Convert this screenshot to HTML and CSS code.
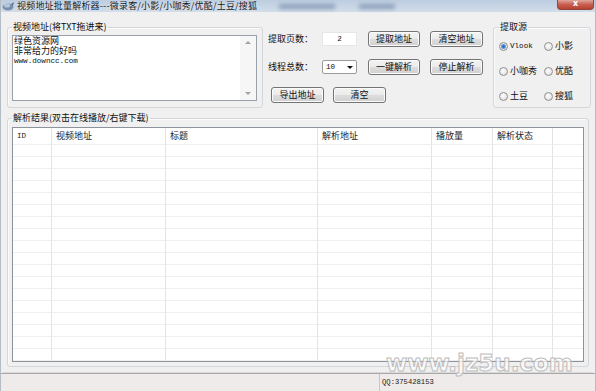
FILE: index.html
```html
<!DOCTYPE html>
<html lang="zh-CN">

<head>
    <meta charset="UTF-8">
    <meta name="viewport" content="width=device-width, initial-scale=1.0">
    <title>视频地址批量解析器</title>

    <link rel="stylesheet" href="styles.css">
</head>

<body>
    <div class="window">
        <div class="title-bar">
            <svg class="app-icon" width="12" height="10" viewBox="0 0 12 10">
                <ellipse cx="6" cy="6" rx="5.5" ry="3.5" fill="#7890ad" />
                <ellipse cx="5" cy="4.5" rx="3" ry="2" fill="#b7c7da" />
                <path d="M9 3 L12 1 L11 5 Z" fill="#5d7594" />
            </svg>
            <span class="title-text">视频地址批量解析器---微录客/小影/小咖秀/优酷/土豆/搜狐</span>
            <span class="ghost ghost-one"></span>
            <span class="ghost ghost-two"></span>
            <div class="close-btn">x</div>
        </div>

        <div class="client">
            <div class="top-row">
                <!-- input list -->
                <fieldset class="group url-group">
                    <legend>视频地址(将TXT拖进来)</legend>
                    <div class="memo">
                        <div class="memo-text">
                            <div class="memo-line">绿色资源网</div>
                            <div class="memo-line">非常给力的好吗</div>
                            <div class="memo-line latin">www.downcc.com</div>
                        </div>
                        <div class="memo-scroll">
                            <span class="arrow arrow-up"></span>
                            <span class="arrow arrow-down"></span>
                        </div>
                    </div>
                </fieldset>

                <div class="controls">
                    <div class="control-row">
                        <span class="control-label">提取页数：</span>
                        <div class="text-box latin">2</div>
                        <button class="btn">提取地址</button>
                        <button class="btn btn-right">清空地址</button>
                    </div>
                    <div class="control-row">
                        <span class="control-label">线程总数：</span>
                        <div class="combo">
                            <span class="latin">10</span>
                            <span class="combo-arrow"></span>
                        </div>
                        <button class="btn">一键解析</button>
                        <button class="btn btn-right">停止解析</button>
                    </div>
                    <div class="control-row bottom-row">
                        <button class="btn btn-export">导出地址</button>
                        <button class="btn btn-clear">清空</button>
                    </div>
                </div>

                <!-- source picker -->
                <fieldset class="group source-group">
                    <legend>提取源</legend>
                    <div class="radio-grid">
                        <label class="radio"><input type="radio" name="source" checked><span class="latin">Vlook</span></label>
                        <label class="radio"><input type="radio" name="source">小影</label>
                        <label class="radio"><input type="radio" name="source">小咖秀</label>
                        <label class="radio"><input type="radio" name="source">优酷</label>
                        <label class="radio"><input type="radio" name="source">土豆</label>
                        <label class="radio"><input type="radio" name="source">搜狐</label>
                    </div>
                </fieldset>
            </div>

            <fieldset class="group result-group">
                <legend>解析结果(双击在线播放/右键下载)</legend>
                <table class="result-list">
                    <thead>
                        <tr>
                            <th class="col-id latin">ID</th>
                            <th class="col-url">视频地址</th>
                            <th class="col-title">标题</th>
                            <th class="col-parse">解析地址</th>
                            <th class="col-views">播放量</th>
                            <th class="col-state">解析状态</th>
                            <th class="col-rest"></th>
                        </tr>
                    </thead>
                    <tbody>
                        <tr><td></td><td></td><td></td><td></td><td></td><td></td><td></td></tr>
                        <tr><td></td><td></td><td></td><td></td><td></td><td></td><td></td></tr>
                        <tr><td></td><td></td><td></td><td></td><td></td><td></td><td></td></tr>
                        <tr><td></td><td></td><td></td><td></td><td></td><td></td><td></td></tr>
                        <tr><td></td><td></td><td></td><td></td><td></td><td></td><td></td></tr>
                        <tr><td></td><td></td><td></td><td></td><td></td><td></td><td></td></tr>
                        <tr><td></td><td></td><td></td><td></td><td></td><td></td><td></td></tr>
                        <tr><td></td><td></td><td></td><td></td><td></td><td></td><td></td></tr>
                        <tr><td></td><td></td><td></td><td></td><td></td><td></td><td></td></tr>
                        <tr><td></td><td></td><td></td><td></td><td></td><td></td><td></td></tr>
                        <tr><td></td><td></td><td></td><td></td><td></td><td></td><td></td></tr>
                        <tr><td></td><td></td><td></td><td></td><td></td><td></td><td></td></tr>
                        <tr><td></td><td></td><td></td><td></td><td></td><td></td><td></td></tr>
                        <tr><td></td><td></td><td></td><td></td><td></td><td></td><td></td></tr>
                        <tr><td></td><td></td><td></td><td></td><td></td><td></td><td></td></tr>
                        <tr><td></td><td></td><td></td><td></td><td></td><td></td><td></td></tr>
                        <tr><td></td><td></td><td></td><td></td><td></td><td></td><td></td></tr>
                        <tr><td></td><td></td><td></td><td></td><td></td><td></td><td></td></tr>
                    </tbody>
                </table>
            </fieldset>
        </div>

        <div class="status-bar">
            <div class="status-cell status-left"></div>
            <div class="status-cell latin status-qq">QQ:375428153</div>
        </div>

        <div class="watermark">www.jz5u.com</div>
    </div>
</body>

</html>
```

FILE: styles.css
```css
body {
    margin: 0;
    font-family: "Noto Sans CJK SC", sans-serif;
    font-size: 9px;
    color: #0e0e0e;
    background-color: #f0f0f0;
    overflow: hidden;
}

.window {
    position: relative;
    width: 596px;
    height: 391px;
    box-sizing: border-box;
    display: flex;
    flex-direction: column;
    background-color: #f0f0f0;
    border-left: 1px solid #b4bcc6;
    border-right: 1px solid #b4bcc6;
}

.latin {
    font-family: "Liberation Mono", monospace;
    font-size: 7.6px;
}

/* title bar */
.title-bar {
    height: 12px;
    flex-shrink: 0;
    display: flex;
    align-items: center;
    padding-left: 1px;
    background: linear-gradient(#bccde0, #d2dde9);
    line-height: 10px;
}

.app-icon {
    flex-shrink: 0;
}

.title-text {
    margin-left: 3px;
    color: #1a1a1a;
    letter-spacing: 0.2px;
    white-space: nowrap;
    text-shadow: 0 0 3px #e8eef5;
}

.ghost {
    height: 5px;
    background-color: #7e93b0;
    filter: blur(2px);
    opacity: 0.8;
}

.ghost-one {
    margin-left: 22px;
    width: 56px;
}

.ghost-two {
    margin-left: 24px;
    width: 36px;
}

.close-btn {
    align-self: flex-start;
    margin-left: auto;
    margin-right: 1px;
    width: 35px;
    height: 9px;
    border: 1px solid #93453d;
    border-top: none;
    border-radius: 0 0 4px 4px;
    background: linear-gradient(#e2a49b, #c95f52 50%, #b8402f);
    color: white;
    font-family: "DejaVu Sans", sans-serif;
    font-weight: bold;
    font-size: 8px;
    line-height: 8px;
    text-align: center;
}

/* client area */
.client {
    flex: 1;
    padding: 10px 0 0 6px;
}

.top-row {
    display: flex;
    align-items: stretch;
}

.group {
    margin: 0;
    border: 1px solid #d3d6da;
    border-radius: 3px;
    box-shadow: inset 1px 1px #fbfbfb;
    min-width: 0;
}

.group legend {
    padding: 0 1px;
    line-height: 10px;
}

.url-group {
    width: 256px;
    box-sizing: border-box;
    padding: 3px 4px 6px 4px;
}

.memo {
    width: 245px;
    height: 66px;
    box-sizing: border-box;
    display: flex;
    border: 1px solid #9aa0a8;
    background: white;
}

.memo-text {
    flex: 1;
    padding-left: 1px;
}

.memo-line {
    height: 10px;
    line-height: 10px;
}

.memo-scroll {
    width: 16px;
    display: flex;
    flex-direction: column;
    align-items: center;
    justify-content: space-between;
    padding: 5px 0;
    background-color: #f6f6f6;
}

.arrow {
    width: 0;
    height: 0;
    border-left: 3px solid transparent;
    border-right: 3px solid transparent;
}

.arrow-up {
    border-bottom: 3px solid #a4a4a4;
}

.arrow-down {
    border-top: 3px solid #a4a4a4;
}

/* middle buttons */
.controls {
    width: 230px;
    padding-top: 9px;
    display: flex;
    flex-direction: column;
    gap: 12px;
}

.control-row {
    display: flex;
    align-items: center;
    height: 16px;
    padding-left: 5px;
}

.control-label {
    width: 54px;
    line-height: 10px;
}

.text-box {
    width: 35px;
    height: 14px;
    box-sizing: border-box;
    margin-right: 11px;
    border: 1px solid #e6e6e6;
    background: white;
    text-align: center;
    line-height: 12px;
}

.combo {
    width: 35px;
    height: 14px;
    box-sizing: border-box;
    margin-right: 11px;
    padding: 0 3px;
    display: flex;
    align-items: center;
    justify-content: space-between;
    border: 1px solid #9c9c9c;
    border-radius: 2px;
    background: white;
}

.combo-arrow {
    width: 0;
    height: 0;
    border-left: 3px solid transparent;
    border-right: 3px solid transparent;
    border-top: 3px solid #111;
}

.btn {
    width: 52px;
    height: 16px;
    margin: 0 10px 0 0;
    padding: 0;
    border: 1px solid #747474;
    border-radius: 3px;
    background: linear-gradient(#f3f3f3, #ebebeb 50%, #dddddd 51%, #d0d0d0);
    box-shadow: inset 0 0 0 1px #fbfbfb;
    font-family: inherit;
    font-size: 9px;
    line-height: 10px;
    color: #0e0e0e;
}

.btn-right {
    width: 53px;
}

.bottom-row {
    padding-left: 8px;
}

.btn-export {
    width: 53px;
    margin-right: 9px;
}

.btn-clear {
    width: 53px;
}

/* source radios */
.source-group {
    width: 98px;
    box-sizing: border-box;
    padding: 8px 2px 5px 5px;
}

.radio-grid {
    display: grid;
    grid-template-columns: 45px auto;
    row-gap: 13px;
}

.radio {
    display: flex;
    align-items: center;
    height: 12px;
    white-space: nowrap;
    line-height: 10px;
}

.radio input {
    appearance: none;
    width: 9px;
    height: 9px;
    margin: 0 2px 0 0;
    border: 1px solid #929292;
    border-radius: 50%;
    background: radial-gradient(circle at 45% 40%, #ffffff, #e6e6e6 60%, #cdcdcd);
}

.radio input:checked {
    background: radial-gradient(circle, #1d5ca8 0, #5f9be0 2px, #d9e6f3 3px, #e6e6e6 60%, #cdcdcd);
}

/* results */
.result-group {
    margin-top: 5px;
    width: 582px;
    box-sizing: border-box;
    padding: 4px;
}

.result-list {
    width: 572px;
    border: 1px solid #8d939b;
    border-spacing: 0;
    border-collapse: separate;
    table-layout: fixed;
    background: white;
}

.result-list th,
.result-list td {
    box-sizing: border-box;
    padding: 0 0 0 4px;
    border-right: 1px solid #e3e3e3;
    border-bottom: 1px solid #efefef;
}

.result-list th {
    height: 17px;
    font-weight: normal;
    text-align: left;
    line-height: 10px;
    color: #1a1a1a;
}

.result-list td {
    height: 12px;
    line-height: 0;
}

.result-list th:last-child,
.result-list td:last-child {
    border-right: none;
}

.col-id { width: 39px; }
.col-url { width: 114px; }
.col-title { width: 152px; }
.col-parse { width: 114px; }
.col-views { width: 61px; }
.col-state { width: 60px; }
.col-rest { width: 30px; }

/* status bar */
.status-bar {
    height: 18px;
    flex-shrink: 0;
    box-sizing: border-box;
    display: flex;
    border-top: 1px solid #a9a9a9;
    background-color: #eeebea;
    box-shadow: 0 -3px 0 -2px #d9d9d9;
}

.status-left {
    width: 378px;
}

.status-qq {
    flex: 1;
    padding: 4px 0 0 2px;
    border-left: 1px solid #c9c6c5;
    font-size: 7.2px;
    color: #1a1a1a;
}

.watermark {
    position: absolute;
    left: 385px;
    top: 352px;
    font-family: "DejaVu Sans", sans-serif;
    font-weight: bold;
    font-size: 23px;
    line-height: 23px;
    color: rgba(255, 255, 255, 0.7);
    -webkit-text-stroke: 1px #bdbdbd;
    white-space: nowrap;
}
```
